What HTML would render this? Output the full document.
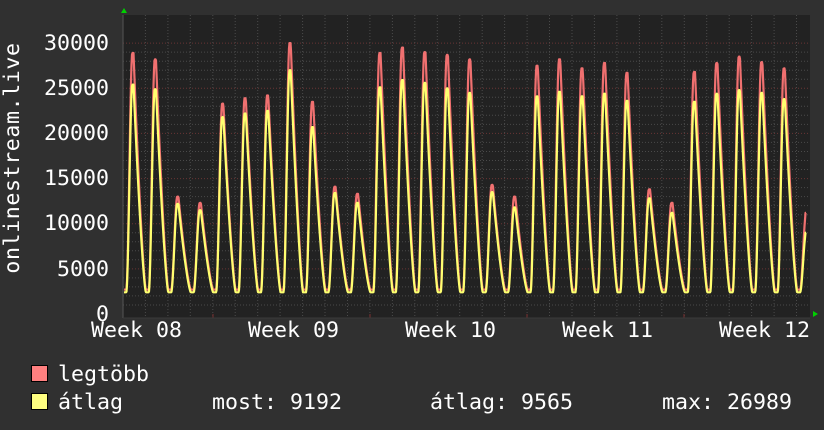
<!DOCTYPE html>
<html><head><meta charset="utf-8"><style>
html,body{margin:0;padding:0;background:#303030;}
body{width:824px;height:430px;overflow:hidden;position:relative;font-family:"DejaVu Sans Mono","Liberation Mono",monospace;color:#fff;}
.t{position:absolute;font-size:21.6px;line-height:1;white-space:pre;}
.sw{position:absolute;width:15px;height:15px;border:1px solid #000;}
</style></head><body>
<svg id="g" width="824" height="430" style="position:absolute;left:0;top:0"></svg>
<div class="t" style="left:44px;top:33px">30000</div>
<div class="t" style="left:44px;top:78px">25000</div>
<div class="t" style="left:44px;top:123px">20000</div>
<div class="t" style="left:44px;top:168px">15000</div>
<div class="t" style="left:44px;top:213px">10000</div>
<div class="t" style="left:57px;top:259px">5000</div>
<div class="t" style="left:96px;top:304px">0</div>
<div class="t" style="left:91px;top:320px">Week 08</div>
<div class="t" style="left:248px;top:320px">Week 09</div>
<div class="t" style="left:405px;top:320px">Week 10</div>
<div class="t" style="left:562px;top:320px">Week 11</div>
<div class="t" style="left:719px;top:320px">Week 12</div>
<div class="t" style="left:13px;top:158px;transform:translate(-50%,-50%) rotate(-90deg);letter-spacing:0.6px">onlinestream.live</div>
<div class="sw" style="left:31px;top:365px;background:#ff8080"></div>
<div class="sw" style="left:31px;top:393px;background:#ffff80"></div>
<div class="t" style="left:58px;top:364px">legtöbb</div>
<div class="t" style="left:58px;top:392px">átlag</div>
<div class="t" style="left:212px;top:392px">most: 9192</div>
<div class="t" style="left:430px;top:392px">átlag: 9565</div>
<div class="t" style="left:662px;top:392px">max: 26989</div>
<script>
(function(){
var s=document.getElementById('g'),h='';
var L=123,R=810,T=15,B=318,Y0=314,k=0.00903;
h+='<rect x="'+L+'" y="'+T+'" width="'+(R-L)+'" height="'+(B-T)+'" fill="#222"/>';
for(var v=1000;v<=30000;v+=1000){var y=Y0-v*k;if(y<T)break;var maj=v%5000==0;
h+='<line x1="'+L+'" x2="'+R+'" y1="'+y.toFixed(1)+'" y2="'+y.toFixed(1)+'" stroke="'+(maj?'#6a3434':'#4a4a4a')+'" stroke-dasharray="1,2"/>';}
for(var x=L+22.45;x<R;x+=22.45){h+='<line x1="'+x.toFixed(1)+'" x2="'+x.toFixed(1)+'" y1="'+T+'" y2="'+B+'" stroke="#4a4a4a" stroke-dasharray="1,2"/>';}
[213,370,527,684].forEach(function(x){h+='<line x1="'+x+'" x2="'+x+'" y1="314" y2="318" stroke="#7a3030"/>';});
h+='<line x1="'+L+'" x2="'+L+'" y1="'+T+'" y2="'+B+'" stroke="#555"/>';
h+='<line x1="'+L+'" x2="'+R+'" y1="'+(B)+'" y2="'+(B)+'" stroke="#3a3a3a"/>';
var mx=[28900,28200,13000,12300,23300,23900,24200,30000,23500,14100,13300,28900,29500,29000,28700,28200,14300,13000,27500,28200,27200,27800,26700,13800,12300,26800,27800,28500,27900,27200,11200];
var av=[25400,24900,12200,11500,21800,22200,22500,27000,20700,13400,12300,25100,25900,25600,25000,24500,13500,11800,24100,24600,24100,24400,23600,12800,11200,23500,24400,24800,24500,23800,9000];
function val(arr,base,x){var best=base;for(var i=0;i<arr.length;i++){var p=132.3+i*22.46;var d=x-p,f=0;
if(d>=-6&&d<=0){var u=(d+6)/6;f=u*u*(3-2*u);}
else if(d>0&&d<=1.2){f=1;}
else if(d>1.2&&d<=13.5){var u=1-(d-1.2)/12.3;f=Math.pow(u,1.35);}
var vv=base+(arr[i]-base)*f;if(vv>best)best=vv;}return best;}
function path(arr,base,col){var p='';for(var x=124;x<=806;x+=0.5){var v=val(arr,base,x);if(x>=805.5)v=arr[arr.length-1];p+=(p?'L':'M')+x+','+(Y0-v*k).toFixed(1);}
return '<path d="'+p+'" fill="none" stroke="'+col+'" stroke-width="2.2" stroke-linejoin="round"/>';}
h+=path(mx,2700,'#f07070');
h+=path(av,2400,'#ffff70');
h+='<polygon points="121,13 127,13 124,8" fill="#00d000"/>';
h+='<polygon points="813,311 813,317 818,314" fill="#00d000"/>';
s.innerHTML=h;
})();
</script>
</body></html>
